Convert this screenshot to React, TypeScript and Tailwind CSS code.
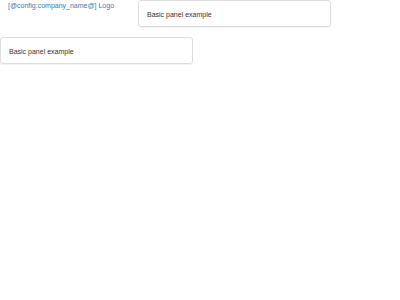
export default function App() {
  return (
    <div className="w-[400px] h-[300px] bg-white" style={{ fontFamily: '"Liberation Sans", Arial, sans-serif' }}>
      <div className="flex items-start">
        <a href="#" className="ml-[8px] mt-[1px] w-[130px] text-[7px] leading-[9px] text-[#337ab7]">[@config:company_name@] Logo</a>
        <div className="w-[193px] h-[27px] border border-[#ddd] rounded-[3px] shadow-[0_1px_1px_rgba(0,0,0,0.05)] px-[8px] pt-[3px] flex items-center text-[7px] text-[#333]">Basic panel example</div>
      </div>
      <div className="mt-[10px] w-[193px] h-[27px] border border-[#ddd] rounded-[3px] shadow-[0_1px_1px_rgba(0,0,0,0.05)] px-[8px] pt-[3px] flex items-center text-[7px] text-[#333]">Basic panel example</div>
    </div>
  );
}
